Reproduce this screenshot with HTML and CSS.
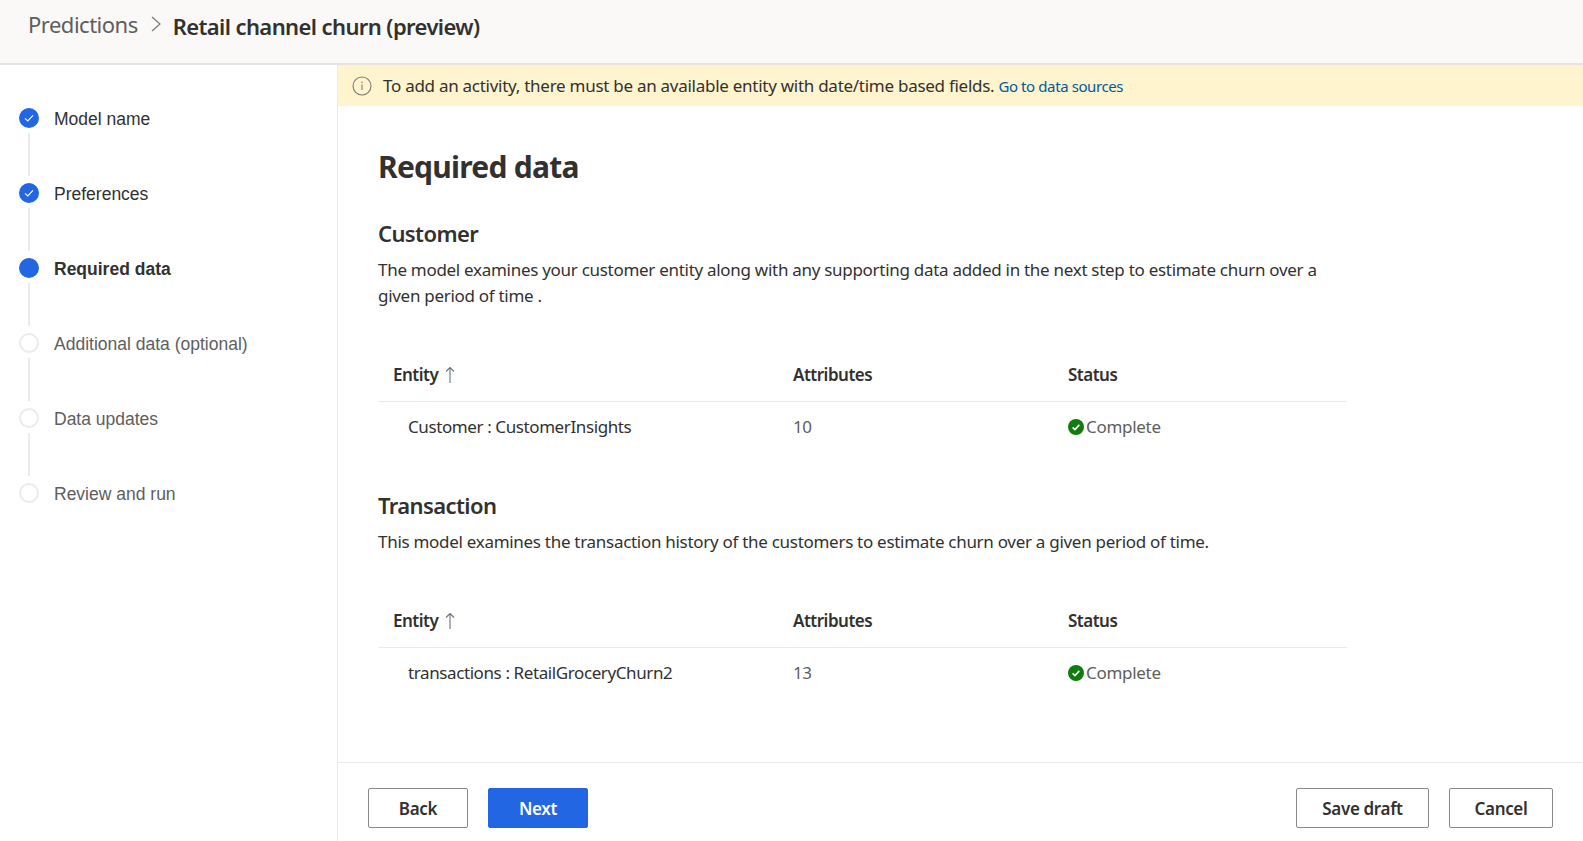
FILE: index.html
```html
<!DOCTYPE html>
<html lang="en">
<head>
    <meta charset="UTF-8">
    <meta name="viewport" content="width=device-width, initial-scale=1.0">
    <title>Retail channel churn (preview)</title>
    <link rel="stylesheet" href="styles.css">
</head>
<body>
    <header class="topbar">
        <span class="crumb">Predictions</span>
        <svg class="crumb-sep" width="12" height="18" viewBox="0 0 12 18"><path d="M2 2l8 7-8 7" fill="none" stroke="#7a7875" stroke-width="1.2"/></svg>
        <span class="crumb-current">Retail channel churn (preview)</span>
    </header>

    <div class="layout">
        <nav class="steps">
            <div class="step done">
                <span class="dot"><svg width="12" height="12" viewBox="0 0 12 12"><path d="M2 6.3l2.8 2.6 5.2-5.6" fill="none" stroke="#fff" stroke-width="1.1"/></svg></span>
                <span class="step-label">Model name</span>
            </div>
            <div class="step-line"></div>
            <div class="step done">
                <span class="dot"><svg width="12" height="12" viewBox="0 0 12 12"><path d="M2 6.3l2.8 2.6 5.2-5.6" fill="none" stroke="#fff" stroke-width="1.1"/></svg></span>
                <span class="step-label">Preferences</span>
            </div>
            <div class="step-line"></div>
            <div class="step current">
                <span class="dot"></span>
                <span class="step-label">Required data</span>
            </div>
            <div class="step-line"></div>
            <div class="step">
                <span class="dot"></span>
                <span class="step-label">Additional data (optional)</span>
            </div>
            <div class="step-line"></div>
            <div class="step">
                <span class="dot"></span>
                <span class="step-label">Data updates</span>
            </div>
            <div class="step-line"></div>
            <div class="step">
                <span class="dot"></span>
                <span class="step-label">Review and run</span>
            </div>
        </nav>

        <main class="main">
            <div class="banner">
                <svg class="banner-icon" width="20" height="20" viewBox="0 0 20 20"><circle cx="10" cy="10" r="9" fill="none" stroke="#7d7a72" stroke-width="1.1"/><path d="M10 8.6v5.4" stroke="#7d7a72" stroke-width="1.1"/><circle cx="10" cy="6.3" r=".8" fill="#7d7a72"/></svg>
                <span class="banner-text">To add an activity, there must be an available entity with date/time based fields.</span>
                <a class="banner-link" href="#">Go to data sources</a>
            </div>

            <div class="content">
                <h1>Required data</h1>

                <section class="block">
                    <h2>Customer</h2>
                    <p>The model examines your customer entity along with any supporting data added in the next step to estimate churn over a given period of time .</p>
                    <div class="table">
                        <div class="row head">
                            <div class="col-entity">Entity <svg width="12" height="18" viewBox="0 0 12 18"><path d="M6 17V1.5M2 5.5l4-4 4 4" fill="none" stroke="#6b7280" stroke-width="1.1"/></svg></div>
                            <div class="col-attr">Attributes</div>
                            <div class="col-status">Status</div>
                        </div>
                        <div class="row">
                            <div class="col-entity name">Customer : CustomerInsights</div>
                            <div class="col-attr muted">10</div>
                            <div class="col-status muted status">
                                <svg width="16" height="16" viewBox="0 0 16 16"><circle cx="8" cy="8" r="8" fill="#107c10"/><path d="M4.6 8.3l2.3 2.2 4.4-4.6" fill="none" stroke="#fff" stroke-width="1.6"/></svg>
                                Complete
                            </div>
                        </div>
                    </div>
                </section>

                <section class="block second">
                    <h2>Transaction</h2>
                    <p>This model examines the transaction history of the customers to estimate churn over a given period of time.</p>
                    <div class="table">
                        <div class="row head">
                            <div class="col-entity">Entity <svg width="12" height="18" viewBox="0 0 12 18"><path d="M6 17V1.5M2 5.5l4-4 4 4" fill="none" stroke="#6b7280" stroke-width="1.1"/></svg></div>
                            <div class="col-attr">Attributes</div>
                            <div class="col-status">Status</div>
                        </div>
                        <div class="row">
                            <div class="col-entity name">transactions : RetailGroceryChurn2</div>
                            <div class="col-attr muted">13</div>
                            <div class="col-status muted status">
                                <svg width="16" height="16" viewBox="0 0 16 16"><circle cx="8" cy="8" r="8" fill="#107c10"/><path d="M4.6 8.3l2.3 2.2 4.4-4.6" fill="none" stroke="#fff" stroke-width="1.6"/></svg>
                                Complete
                            </div>
                        </div>
                    </div>
                </section>
            </div>

            <footer class="footer">
                <button class="btn btn-back">Back</button>
                <button class="btn btn-next">Next</button>
                <div class="footer-right">
                    <button class="btn btn-save">Save draft</button>
                    <button class="btn btn-cancel">Cancel</button>
                </div>
            </footer>
        </main>
    </div>
</body>
</html>
```

FILE: styles.css
```css
* {
    box-sizing: border-box;
}
body {
    margin: 0;
    height: 100vh;
    overflow: hidden;
    display: flex;
    flex-direction: column;
    font-family: "Noto Sans", "Open Sans", sans-serif;
    color: #323130;
    background-color: #fff;
}
.topbar {
    height: 65px;
    flex-shrink: 0;
    display: flex;
    align-items: center;
    padding-left: 28px;
    padding-bottom: 12px;
    background-color: #faf9f8;
    border-bottom: 2px solid #e4e3e1;
}
.crumb {
    font-size: 22px;
    color: #605e5c;
    letter-spacing: -0.5px;
    margin-top: -4px;
}
.crumb-sep {
    margin: -3px 11px 0 12px;
}
.crumb-current {
    font-size: 22px;
    font-weight: 600;
    color: #323130;
    letter-spacing: -0.6px;
}
.layout {
    flex: 1;
    display: flex;
    min-height: 0;
}
.steps {
    width: 338px;
    flex-shrink: 0;
    padding: 43px 0 0 19px;
    border-right: 1px solid #edebe9;
    font-family: "Liberation Sans", Arial, sans-serif;
    font-size: 17.5px;
    color: #605e5c;
}
.step {
    display: flex;
    align-items: center;
    height: 20px;
    gap: 15px;
}
.step-label {
    margin-top: 2px;
}
.dot {
    width: 20px;
    height: 20px;
    border-radius: 50%;
    border: 2px solid #edebe9;
    flex-shrink: 0;
    display: flex;
    align-items: center;
    justify-content: center;
}
.step.done .dot, .step.current .dot {
    background-color: #2266e3;
    border-color: #2266e3;
}
.step.done .step-label {
    color: #323130;
}
.step.current .step-label {
    color: #323130;
    font-weight: bold;
}
.step-line {
    width: 2px;
    height: 43px;
    margin: 5px 0 7px 9px;
    background-color: #edebe9;
}
.main {
    flex: 1;
    min-width: 0;
    display: flex;
    flex-direction: column;
}
.banner {
    height: 41px;
    flex-shrink: 0;
    display: flex;
    align-items: center;
    padding-left: 14px;
    background-color: #fff4ce;
    font-size: 17px;
}
.banner-icon {
    margin-right: 11px;
}
.banner-text {
    letter-spacing: -0.27px;
}
.banner-link {
    margin-left: 4px;
    font-size: 15px;
    letter-spacing: -0.4px;
    color: #005a9e;
    text-decoration: none;
}
.content {
    flex: 1;
    padding: 0 0 0 40px;
    width: 1009px;
}
h1 {
    margin: 41px 0 0;
    font-size: 30px;
    line-height: 40px;
    font-weight: 700;
    letter-spacing: -0.75px;
}
h2 {
    margin: 0;
    font-size: 22px;
    line-height: 30px;
    font-weight: 600;
    letter-spacing: -0.6px;
}
.block {
    margin-top: 31px;
}
.block.second {
    margin-top: 39px;
}
p {
    margin: 9px 0 0;
    width: 950px;
    font-size: 17px;
    line-height: 26px;
    letter-spacing: -0.29px;
}
.table {
    margin-top: 39px;
    font-size: 17px;
}
.row {
    display: flex;
    align-items: center;
    height: 49px;
    letter-spacing: -0.4px;
}
.row.head {
    height: 54px;
    font-weight: 600;
    border-bottom: 1px solid #edebe9;
    letter-spacing: -0.5px;
}
.col-entity {
    width: 415px;
    padding-left: 15px;
    display: flex;
    align-items: center;
    gap: 6px;
}
.col-entity.name {
    padding-left: 30px;
}
.col-attr {
    width: 275px;
}
.muted {
    color: #605e5c;
}
.status {
    display: flex;
    align-items: center;
    gap: 2px;
    letter-spacing: -0.3px;
}
.footer {
    height: 79px;
    flex-shrink: 0;
    display: flex;
    align-items: flex-start;
    gap: 20px;
    padding: 25px 30px 0;
    border-top: 1px solid #edebe9;
}
.footer-right {
    margin-left: auto;
    display: flex;
    gap: 20px;
}
.btn {
    height: 40px;
    width: 100px;
    padding: 0;
    font-family: inherit;
    font-size: 17px;
    font-weight: 600;
    letter-spacing: -0.35px;
    color: #323130;
    background-color: #fff;
    border: 1px solid #8a8886;
    border-radius: 2px;
}
.btn-next {
    color: #fff;
    background-color: #2266e3;
    border-color: #2266e3;
}
.btn-save {
    width: 133px;
}
.btn-cancel {
    width: 104px;
}
```
